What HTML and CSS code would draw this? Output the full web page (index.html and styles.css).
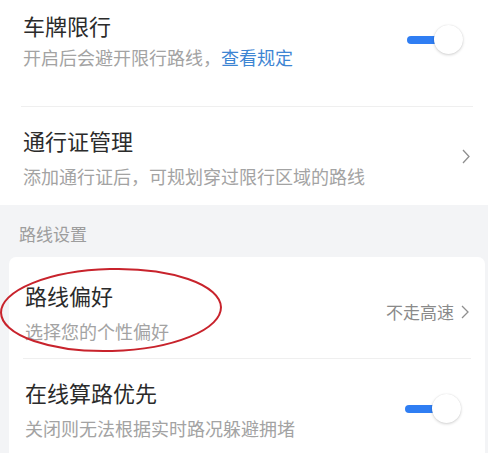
FILE: index.html
```html
<!DOCTYPE html>
<html lang="zh-CN">
<head>
    <meta charset="UTF-8">
    <meta name="viewport" content="width=device-width, initial-scale=1.0">
    <title>路线设置</title>
    <link rel="stylesheet" href="styles.css">
</head>
<body>

    <!-- Top block: plate limit + pass management -->
    <div class="block">
        <div class="row row-first">
            <div class="row-text">
                <div class="row-title">车牌限行</div>
                <div class="row-sub">开启后会避开限行路线，<a class="link" href="#">查看规定</a></div>
            </div>
            <div class="switch">
                <span class="switch-track"></span>
                <span class="switch-knob"></span>
            </div>
        </div>

        <div class="row">
            <div class="row-text">
                <div class="row-title">通行证管理</div>
                <div class="row-sub">添加通行证后，可规划穿过限行区域的路线</div>
            </div>
            <svg class="chevron" width="8" height="15" viewBox="0 0 8 15">
                <path d="M1 1 L7 7.5 L1 14" />
            </svg>
        </div>
    </div>

    <!-- Route settings section -->
    <div class="section-label">路线设置</div>

    <div class="card">
        <div class="row row-card row-pref">
            <div class="row-text">
                <div class="row-title">路线偏好</div>
                <div class="row-sub">选择您的个性偏好</div>
            </div>
            <div class="row-value">
                <span>不走高速</span>
                <svg class="chevron" width="8" height="14" viewBox="0 0 8 14">
                    <path d="M1 1 L7 7 L1 13" />
                </svg>
            </div>
        </div>

        <div class="row row-card">
            <div class="row-text">
                <div class="row-title">在线算路优先</div>
                <div class="row-sub">关闭则无法根据实时路况躲避拥堵</div>
            </div>
            <div class="switch">
                <span class="switch-track"></span>
                <span class="switch-knob"></span>
            </div>
        </div>
    </div>

    <!-- Red hand-drawn mark around "路线偏好" -->
    <svg class="mark" width="230" height="92" viewBox="0 0 230 92">
        <ellipse cx="113" cy="44" rx="110" ry="41" transform="rotate(-1.5 113 44)" />
    </svg>

</body>
</html>
```

FILE: styles.css
```css
body {
    margin: 0;
    height: 453px;
    overflow: hidden;
    background: #f3f4f6;
    font-family: "Noto Sans CJK SC", "Noto Sans", sans-serif;
    position: relative;
}

.block {
    background: #fff;
}

.row {
    display: flex;
    align-items: center;
    padding: 19px 18px 17px 23px;
    position: relative;
}

.row + .row::before {
    content: "";
    position: absolute;
    top: 0;
    left: 21px;
    right: 15px;
    border-top: 1px solid #efefef;
}

.row-first {
    padding-top: 10px;
    padding-bottom: 37px;
    padding-right: 25px;
}

.row-first .row-sub {
    margin-top: 5px;
}

.row-text {
    flex: 1;
}

.row-title {
    font-size: 22px;
    line-height: 30px;
    color: #2b2b2b;
}

.row-sub {
    margin-top: 9px;
    font-size: 18px;
    line-height: 24px;
    color: #a3a3a3;
}

.link {
    color: #3d85d3;
    text-decoration: none;
}

.chevron path {
    fill: none;
    stroke: #8f8f8f;
    stroke-width: 1.3;
}

/* toggle switch */
.switch {
    position: relative;
    width: 56px;
    height: 30px;
}

.switch-track {
    position: absolute;
    left: 0;
    top: 11px;
    width: 40px;
    height: 8px;
    border-radius: 4px;
    background: #2f7ef3;
}

.switch-knob {
    position: absolute;
    right: 0;
    top: 0;
    width: 29px;
    height: 29px;
    border-radius: 50%;
    background: #fff;
    box-shadow: 0 1px 3px rgba(0, 0, 0, 0.18), 0 0 1px rgba(0, 0, 0, 0.12);
}

.section-label {
    padding: 17px 19px 11px;
    font-size: 17px;
    line-height: 24px;
    color: #9d9d9d;
}

.card {
    margin: 0 3px 0 9px;
    padding-bottom: 20px;
    background: #fff;
    border-radius: 7px;
}

.row-card {
    padding-left: 16px;
    padding-right: 16px;
}

.row-card + .row-card::before {
    left: 14px;
    right: 14px;
}

.row-card .switch {
    margin-right: 8px;
}

.row-pref {
    padding-top: 23px;
    padding-bottom: 15px;
}

.row-value {
    display: flex;
    align-items: center;
    gap: 7px;
    font-size: 17px;
    color: #8a8a8a;
}

.mark {
    position: absolute;
    left: -2px;
    top: 266px;
}

.mark ellipse {
    fill: none;
    stroke: #c8232c;
    stroke-width: 2;
}
```
